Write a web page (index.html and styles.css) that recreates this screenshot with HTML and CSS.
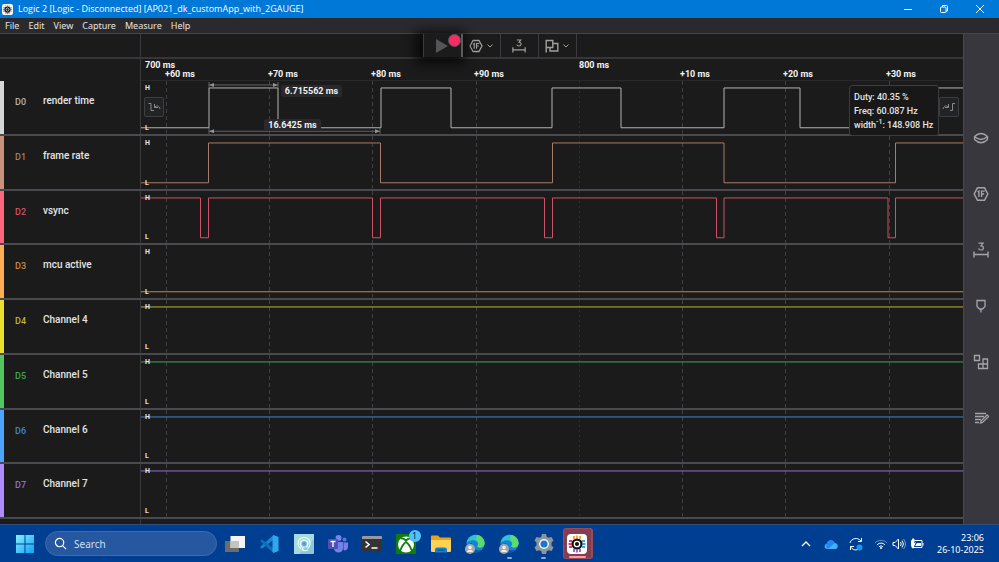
FILE: index.html
```
<!DOCTYPE html>
<html lang="en">
<head>
<meta charset="utf-8">
<title>Logic 2 [Logic - Disconnected] [AP021_dk_customApp_with_2GAUGE]</title>
<link rel="stylesheet" href="styles.css">
</head>
<body>
<svg class="defs" aria-hidden="true">
  <symbol id="logic" viewBox="0 0 20 20">
    <rect width="20" height="20" rx="4" fill="#fff"/>
    <path d="M7 2v3M10 1.500v3M13 2v3" stroke="#f8a01c" stroke-width="1.800"/>
    <path d="M7 15v3M10 15.500v3M13 15v3" stroke="#a34bf0" stroke-width="1.800"/>
    <path d="M2 7h3M1.500 10h3M2 13h3" stroke="#f2345a" stroke-width="1.800"/>
    <path d="M15 7h3M15.500 10h3M15 13h3" stroke="#35a7f3" stroke-width="1.800"/>
    <circle cx="10" cy="10" r="5.600" fill="#111"/><circle cx="10" cy="10" r="2.700" fill="none" stroke="#fff" stroke-width="1.300"/>
  </symbol>
  <symbol id="hex" viewBox="0 0 14 14">
    <path d="M4 1.500h6L13 7l-3 5.500H4L1 7z" fill="none" stroke="currentColor" stroke-width="1.300" stroke-linejoin="round"/>
    <path d="M4 5.200l1.200-.7v5.200M7.500 9.700V4.500h2.800M7.500 7h2.300" fill="none" stroke="currentColor" stroke-width="1.200"/>
  </symbol>
  <symbol id="three" viewBox="0 0 16 16">
    <path d="M5.500 1.200h4.500L8 3.800c3.300 0 3 4.200 0 4.200-1.400 0-2.300-.7-2.500-1.600" fill="none" stroke="currentColor" stroke-width="1.200"/>
    <path d="M1 9.500v6M15 9.500v6M1 12.500h14" fill="none" stroke="currentColor" stroke-width="1.400"/>
  </symbol>
  <symbol id="down" viewBox="0 0 8 6"><path d="M1.500 1.500L4 4l2.500-2.500" fill="none" stroke="currentColor"/></symbol>
  <symbol id="ticks" viewBox="0 0 822 53" preserveAspectRatio="none">
    <path class="tick" d="M25.500 0V53M128.500 0V53M231.500 0V53M335.500 0V53M541.500 0V53M644.500 0V53M748.500 0V53"/>
    <path class="tick major" d="M438.500 0V53"/>
  </symbol>
  <symbol id="browser" viewBox="0 0 20 20">
    <circle cx="10.500" cy="9.500" r="9" fill="#1684d4"/>
    <path d="M1.500 9C3 1.500 10 0 14 1.500c5 2 6.500 7 5 10-1.500 2.500-5 2.500-7 1 2-2 1-5-2-6-3-.8-7 .5-8.500 2.500z" fill="#2fc3d4"/>
    <path d="M12 1c6 .5 8.500 6.500 7.200 10-1.200 2.800-5 3-7.200 1.500 2-2 2-5-1-7z" fill="#5edb68"/>
    <path d="M7 9c-1 5 4 8.500 9.500 7-4 4-10 3-12.500-1-1.500-3 0-5 3-6z" fill="#0b55a8"/>
    <circle cx="5" cy="15" r="5" fill="#a9a9aa"/><circle cx="5" cy="13.500" r="1.800" fill="#eee"/><path d="M2 18c.5-3 5.500-3 6 0z" fill="#eee"/>
  </symbol>
</svg>

<header class="titlebar">
  <svg class="app-icon"><use href="#logic"/></svg>
  <h1>Logic 2 [Logic - Disconnected] [AP021_dk_customApp_with_2GAUGE]</h1>
  <button aria-label="Minimize"><svg viewBox="0 0 10 10"><path d="M1 5.500h8"/></svg></button>
  <button aria-label="Restore"><svg viewBox="0 0 10 10"><rect x="1.500" y="3" width="5.500" height="5.500" rx="1"/><path d="M3.500 3V1.500h4Q8.500 1.500 8.500 2.500v4.500H7"/></svg></button>
  <button aria-label="Close"><svg viewBox="0 0 10 10"><path d="M1 1l8 8M9 1L1 9"/></svg></button>
</header>

<nav class="menubar">
  <button>File</button><button>Edit</button><button>View</button><button>Capture</button><button>Measure</button><button>Help</button>
</nav>

<main>
  <section class="workspace">
    <div class="toolbar">
      <button class="play" aria-label="Start capture"><svg viewBox="0 0 12 14"><path d="M0 0l12 7-12 7z" fill="#555557"/></svg><span class="record"></span></button>
      <button aria-label="Analyzers"><svg class="i14"><use href="#hex"/></svg><svg class="caret"><use href="#down"/></svg></button>
      <button aria-label="Measurements"><svg class="i14"><use href="#three"/></svg></button>
      <button aria-label="Markers"><svg class="i14" viewBox="0 0 14 14"><path d="M1.200 13.500V1.500h6.600v7H1.200M7.800 4.500H12.800V12H5V8.500" fill="none" stroke="currentColor" stroke-width="1.400"/></svg><svg class="caret"><use href="#down"/></svg></button>
    </div>

    <div class="ruler">
      <span class="base first">700 ms</span><span class="base second">800 ms</span>
      <span class="step s1">+60 ms</span><span class="step s2">+70 ms</span><span class="step s3">+80 ms</span><span class="step s4">+90 ms</span>
      <span class="step s6">+10 ms</span><span class="step s7">+20 ms</span><span class="step s8">+30 ms</span>
    </div>

    <div class="channels">
      <div class="channel d0">
        <div class="label"><span class="id">D0</span><span>render time</span></div>
        <div class="plot">
          <svg class="wave" viewBox="0 0 822 53" preserveAspectRatio="none"><use href="#ticks"/>
            <path class="trace" d="M0 47H68V7H137V47H240V7H310V47H411V7H480V47H583V7H659V47H755V7H822"/>
            <path class="span" d="M68 4H137M68 50.500H239M68 1V7M137 1V7M68 47V53M239 47V53"/>
            <path class="heads" d="M68 4l5-2v4zM137 4l-5-2v4zM68 50.500l5-2v4zM239 50.500l-5-2v4z"/>
          </svg>
          <div class="levels"><b>H</b><b>L</b></div>
          <span class="measure pulse">6.715562 ms</span>
          <span class="measure period">16.6425 ms</span>
          <button class="snap previous" aria-label="Previous edge"><svg viewBox="0 0 14 10"><path d="M1.500 1.500H4v7h3M13 7C12 3.500 9.500 3 7.500 5.500M7.500 2v3.500H11"/></svg></button>
          <button class="snap next" aria-label="Next edge"><svg viewBox="0 0 14 10"><path d="M13 1.500h-2.500v7H8M1 7C2 3.500 4.500 3 6.500 5.500M6.500 2v3.500H3"/></svg></button>
          <div class="tooltip"><div>Duty: 40.35 %</div><div>Freq: 60.087 Hz</div><div>width<sup>-1</sup>: 148.908 Hz</div></div>
        </div>
      </div>
      <div class="channel d1">
        <div class="label"><span class="id">D1</span><span>frame rate</span></div>
        <div class="plot"><svg class="wave" viewBox="0 0 822 53" preserveAspectRatio="none"><use href="#ticks"/><path class="trace" d="M0 47H67.500V7H239.500V47H411.500V7H583V47H754.500V7H822"/></svg><div class="levels"><b>H</b><b>L</b></div></div>
      </div>
      <div class="channel d2">
        <div class="label"><span class="id">D2</span><span>vsync</span></div>
        <div class="plot"><svg class="wave" viewBox="0 0 822 53" preserveAspectRatio="none"><use href="#ticks"/><path class="trace" d="M0 7H59.500V47H67.500V7H231.500V47H239.500V7H403.500V47H411.500V7H575.500V47H583V7H747V47H754.500V7H822"/></svg><div class="levels"><b>H</b><b>L</b></div></div>
      </div>
      <div class="channel d3">
        <div class="label"><span class="id">D3</span><span>mcu active</span></div>
        <div class="plot"><svg class="wave" viewBox="0 0 822 53" preserveAspectRatio="none"><use href="#ticks"/><path class="trace" d="M0 47H822"/></svg><div class="levels"><b>H</b><b>L</b></div></div>
      </div>
      <div class="channel d4">
        <div class="label"><span class="id">D4</span><span>Channel 4</span></div>
        <div class="plot"><svg class="wave" viewBox="0 0 822 53" preserveAspectRatio="none"><use href="#ticks"/><path class="trace" d="M0 7H822"/></svg><div class="levels"><b>H</b><b>L</b></div></div>
      </div>
      <div class="channel d5">
        <div class="label"><span class="id">D5</span><span>Channel 5</span></div>
        <div class="plot"><svg class="wave" viewBox="0 0 822 53" preserveAspectRatio="none"><use href="#ticks"/><path class="trace" d="M0 7H822"/></svg><div class="levels"><b>H</b><b>L</b></div></div>
      </div>
      <div class="channel d6">
        <div class="label"><span class="id">D6</span><span>Channel 6</span></div>
        <div class="plot"><svg class="wave" viewBox="0 0 822 53" preserveAspectRatio="none"><use href="#ticks"/><path class="trace" d="M0 7H822"/></svg><div class="levels"><b>H</b><b>L</b></div></div>
      </div>
      <div class="channel d7">
        <div class="label"><span class="id">D7</span><span>Channel 7</span></div>
        <div class="plot"><svg class="wave" viewBox="0 0 822 53" preserveAspectRatio="none"><use href="#ticks"/><path class="trace" d="M0 7H822"/></svg><div class="levels"><b>H</b><b>L</b></div></div>
      </div>
    </div>
  </section>

  <aside class="sidebar">
    <button aria-label="Device"><svg viewBox="0 0 16 16"><path d="M1.500 6.500Q8 .5 14.500 6.500 8 12.500 1.500 6.500zM1.500 6.500v3Q8 16 14.500 9.500v-3" stroke-linejoin="round"/></svg></button>
    <button aria-label="Analyzers"><svg><use href="#hex"/></svg></button>
    <button aria-label="Measurements"><svg><use href="#three"/></svg></button>
    <button aria-label="Annotations"><svg viewBox="0 0 16 16"><path d="M4 2.500h8v6L9.500 11h-3L4 8.500zM8 11v3.500"/></svg></button>
    <button aria-label="Extensions"><svg viewBox="0 0 16 16"><path d="M1.500 1.500h5v5h-5zM9.500 5h5v9.500h-9V10h9M10 5v9.500"/></svg></button>
    <button aria-label="Notes"><svg viewBox="0 0 16 16"><path d="M2 3.500h11M2 6.500h9M2 9.500h6M2 12.500h4M7.500 13l.5-2 6-6 1.500 1.500-6 6z"/></svg></button>
  </aside>
</main>

<footer class="taskbar">
  <button class="start" aria-label="Start"><svg viewBox="0 0 20 20"><defs><linearGradient id="win" x1="0" y1="0" x2="1" y2="1"><stop stop-color="#86f0fe"/><stop offset="1" stop-color="#0fa2f5"/></linearGradient></defs><path fill="url(#win)" d="M1 1h8.500v8.500H1zM10.500 1H19v8.500h-8.500zM1 10.500h8.500V19H1zM10.500 10.500H19V19h-8.500z"/></svg></button>
  <label class="search"><svg viewBox="0 0 14 14"><circle cx="6" cy="6" r="4.500"/><path d="M9.500 9.500L13 13"/></svg><input type="text" placeholder="Search" aria-label="Search"></label>
  <div class="apps">
    <button aria-label="Task view"><svg viewBox="0 0 20 20"><path d="M0 7h14v11H0z" fill="#6f6c68"/><path d="M5.500 2H20v12H5.500z" fill="#f4f4f4"/><path d="M5.500 7H14v7H5.500z" fill="#c4c4c4"/></svg></button>
    <button aria-label="Visual Studio Code"><svg viewBox="0 0 20 20"><path d="M14.500 1L1 13l1.800 1.800L15 5.500z" fill="#1288d5"/><path d="M14.500 19L1 7l1.800-1.800L15 14.500z" fill="#0872b9"/><path d="M14.500 1L19.500 3v14l-5 2-1-1.500v-15z" fill="#30a6ee"/></svg></button>
    <button aria-label="Toolkit"><svg viewBox="0 0 20 20"><rect width="20" height="20" rx="1" fill="#8cc6d8"/><path d="M0 0h20v5L5 20H0z" fill="#a8dcdc"/><path d="M7 14.500C1 10 5 3.500 10 3.500S19 10 13.500 14.500M8 13C4.500 9.500 7 6 10 6s5.500 3.500 2.500 7M14 16c-6 2-6-1-5-3" fill="none" stroke="#e8ffff" stroke-width="1.200"/><circle cx="10.200" cy="9.800" r="2.200" fill="#5b9ccc"/></svg></button>
    <button aria-label="Teams"><svg viewBox="0 0 20 20"><circle cx="10.500" cy="4" r="3" fill="#7b83eb"/><circle cx="16.500" cy="5.500" r="2" fill="#6670d8"/><path d="M6 8h9v6c0 6-9 6-9 0zM15.500 8.500H20V13c0 3-3 4-4.500 3z" fill="#7580e8"/><rect y="5" width="10" height="10" rx="1" fill="#4d50b8"/><path d="M2.500 7.500h5M5 7.500V13" stroke="#fff" stroke-width="1.300"/></svg></button>
    <button aria-label="Terminal"><svg viewBox="0 0 20 20"><rect y="2" width="20" height="16" rx="1" fill="#343434"/><path d="M0 3q0-1 1-1h18q1 0 1 1v2H0z" fill="#999"/><path d="M3.500 7.500L7 10.500l-3.500 3M9.500 14h6" fill="none" stroke="#fff" stroke-width="1.600"/></svg></button>
    <button aria-label="Xbox"><svg viewBox="0 0 20 20"><rect width="20" height="20" rx="1" fill="#107c10"/><circle cx="10" cy="10.500" r="8" fill="#fff"/><path d="M4 17C5.500 13 8.500 9 10 8c1.500 1 4.500 5 6 9M4.500 4.500C7 4 9 5.500 10 6.500c1-1 3-2.500 5.500-2" fill="none" stroke="#107c10" stroke-width="1.800"/></svg><span class="badge">1</span></button>
    <button aria-label="File Explorer"><svg viewBox="0 0 20 20"><path d="M0 2.500q0-1 1-1h6l2 2h10q1 0 1 1V10H0z" fill="#e7a313"/><path d="M0 6h20v11q0 1-1 1H1q-1 0-1-1z" fill="#ffd255"/><path d="M4 18.500v-3q0-2 2-2h8q2 0 2 2v3z" fill="#1b7ecb"/><path d="M6.500 16h7" stroke="#095591" stroke-width="1.200"/></svg></button>
    <button aria-label="Edge"><svg><use href="#browser"/></svg></button>
    <button class="open" aria-label="Edge, second profile"><svg><use href="#browser"/></svg></button>
    <button class="open" aria-label="Settings"><svg viewBox="0 0 20 20"><path d="M8 0h4l.7 2.800 2 1 2.800-.8 2 3.500-2 2v3l2 2-2 3.500-2.800-.8-2 1L12 20H8l-.7-2.800-2-1-2.800.8-2-3.500 2-2v-3l-2-2L2.500 3l2.800.8 2-1z" fill="#8d959d"/><circle cx="10" cy="10" r="5" fill="#f1f3f5"/><circle cx="10" cy="10" r="3.500" fill="#1677cf"/></svg></button>
    <button class="active" aria-label="Logic 2"><svg><use href="#logic"/></svg></button>
  </div>
  <div class="tray">
    <svg class="line" viewBox="0 0 14 14"><path d="M3 9l4-4 4 4" stroke-width="1.300"/></svg>
    <svg class="cloud" viewBox="0 0 14 14"><path d="M3.500 12C-.5 12 0 7 3 6.500 4 2.500 9.500 2 10.500 6c4 0 4.500 6 .5 6z" fill="#35b8fa"/><path d="M3 6.500C4 2.500 9.500 2 10.500 6L4.500 11.500Q1 11 3 6.500z" fill="#2d83ef"/></svg>
    <svg class="line sync" viewBox="0 0 14 14"><path d="M1 6C2 1 9 0 12 4M12.500 1v3.500H9M1.500 13V9.500H5M1.500 9.500C3 12.500 6 13.500 9 12.500"/><circle cx="10.500" cy="10.500" r="3" fill="#1598ee" stroke="none"/></svg>
    <svg class="line wifi" viewBox="0 0 14 14"><path d="M1 6C4 2.500 10 2.500 13 6" opacity=".4"/><path d="M3 8C5 5.500 9 5.500 11 8M5 10c1-1.500 3-1.500 4 0"/><circle cx="7" cy="11" r="1" fill="#fff" stroke="none"/></svg>
    <svg class="line" viewBox="0 0 14 14"><path d="M1 5.500h2L6.500 2v10L3 8.500H1zM8.500 5q1.500 2 0 4M10 3.500q3 3.500 0 7"/><path d="M11.500 2q4 5 0 10" opacity=".5"/></svg>
    <svg class="line battery" viewBox="0 0 14 14"><path d="M5 3.500h7v7H2V8M13 6v2.500"/><path d="M1 8V4l2-3 2 2-1 3 2-1-3 7zM7 6h4v3H5z" fill="#fff" stroke="none"/></svg>
    <time datetime="2025-10-26T23:06"><span>23:06</span><span>26-10-2025</span></time>
  </div>
</footer>
</body>
</html>
```
FILE: styles.css
```
* { box-sizing: border-box; }
body {
  margin: 0;
  height: 100vh;
  display: grid;
  grid-template-rows: 18px 16px minmax(0, 1fr) 38px;
  overflow: hidden;
  background: #1b1b1b;
  color: #e4e4e4;
  font: 10px/12px Roboto, sans-serif;
}
button { padding: 0; border: 0; background: none; color: inherit; font: inherit; }
svg { display: block; flex: none; }
.defs { position: absolute; width: 0; height: 0; }

.menubar, .taskbar { font-family: "Noto Sans", sans-serif; }
.titlebar { display: flex; align-items: center; padding-right: 1px; background: #0078d7; color: #fff; font-family: "Open Sans", sans-serif; }
.titlebar h1 { flex: 1; margin: 0 0 0 5px; font-size: 9px; font-weight: 400; }
.app-icon { width: 11px; height: 11px; margin-left: 2px; }
.titlebar button { width: 36px; height: 18px; display: grid; place-items: center; }
.titlebar button svg { width: 10px; height: 10px; fill: none; stroke: #fff; }

.menubar { display: flex; align-items: center; gap: 9px; padding-left: 5px; background: #2a2a2e; border-bottom: 1px solid #45454a; font-size: 9px; }

main { display: grid; grid-template-columns: minmax(0, 1fr) 36px; grid-template-rows: minmax(0, 1fr); min-height: 0; }
.workspace {
  display: grid;
  grid-template-rows: 25px 22px minmax(0, 1fr);
  min-height: 0;
  padding-bottom: 5px;
  background: linear-gradient(#3b3b3f, #3b3b3f) 140px 0 / 1px 100% no-repeat #1b1b1b;
}
.toolbar { display: flex; justify-content: center; padding-left: 36px; border-bottom: 2px solid #36363a; }
.toolbar button { width: 38px; display: flex; align-items: center; justify-content: center; gap: 3px; border-right: 1px solid #3c3c40; color: #a0a0a0; background: #1b1b1b; }
.toolbar .play { position: relative; width: 40px; border-left: 1px solid #3c3c40; border-right: 2px solid #59595e; box-shadow: -3px 2px 12px 4px #080808; }
.play svg { width: 12px; height: 14px; }
.record { position: absolute; top: 0; right: 0; width: 13px; height: 13px; border: 1px solid #55555b; border-radius: 50%; background: #fb2a63; }
.i14 { width: 14px; height: 14px; }
.caret { width: 8px; height: 6px; }

.ruler {
  display: grid;
  grid-template-columns: minmax(0, 24fr) repeat(7, minmax(0, 103fr)) minmax(0, 77fr);
  grid-template-rows: 10px 9px;
  margin-left: 141px;
  border-bottom: 1px solid #29292b;
  font-size: 9px;
  line-height: 12px;
  font-weight: 700;
  color: #f3f3f3;
  white-space: nowrap;
}
.base { grid-row: 1; }
.first { grid-column: 1; padding-left: 4px; }
.second { grid-column: 6; padding-left: 2px; }
.step { grid-row: 2; line-height: 10px; }
.s1 { grid-column: 2; } .s2 { grid-column: 3; } .s3 { grid-column: 4; } .s4 { grid-column: 5; }
.s6 { grid-column: 7; } .s7 { grid-column: 8; } .s8 { grid-column: 9; }

.channels { display: grid; grid-template-rows: repeat(8, minmax(0, 1fr)); min-height: 0; }
.channel { display: grid; grid-template-columns: 141px minmax(0, 1fr); grid-template-rows: minmax(0, 1fr); min-height: 0; border-bottom: 2px solid #4a4a4e; }
.label { display: grid; grid-template-columns: 28px 1fr; align-items: start; margin-right: 1px; padding: 13px 0 0 11px; border-left: 4px solid var(--bar); font-size: 10px; line-height: 14px; font-weight: 500; }
.id { color: var(--line); font-size: 9px; line-height: 16px; }
.plot { position: relative; min-height: 0; }
.wave { width: 100%; height: 100%; }
.wave path { vector-effect: non-scaling-stroke; }
.trace { fill: none; stroke: var(--line); stroke-width: 1px; shape-rendering: crispEdges; }
.tick { fill: none; stroke: #414143; stroke-dasharray: 4 3; vector-effect: non-scaling-stroke; shape-rendering: crispEdges; }
.major { stroke: #2e2e30; stroke-dasharray: 2 3; }
.span { fill: none; stroke: #626264; shape-rendering: crispEdges; }
.heads { fill: #929292; }
.levels { position: absolute; inset: 3px auto 2px 4px; display: flex; flex-direction: column; justify-content: space-between; font-size: 7px; line-height: 8px; }
.d0 { --bar: #d6d6d6; --line: #b4b4b4; }
.d1 { --bar: #c7917a; --line: #a87b68; }
.d2 { --bar: #ff667d; --line: #cc5267; }
.d3 { --bar: #ffad55; --line: #c98846; }
.d4 { --bar: #e9df31; --line: #c0b42b; }
.d5 { --bar: #50c760; --line: #46a354; }
.d6 { --bar: #4ba5ff; --line: #3f88cf; }
.d7 { --bar: #ad8cff; --line: #8c73ca; }
.measure { position: absolute; padding: 0 4px; border-radius: 2px; background: #29292c; color: #f1f1f1; font-size: 9px; font-weight: 700; white-space: nowrap; }
.pulse { left: 17%; top: 4px; }
.period { left: 15%; bottom: 3px; }
.snap { position: absolute; top: 16px; width: 20px; height: 20px; display: grid; place-items: center; border: 1px solid #3d3e42; border-radius: 2px; background: #222325; }
.snap svg { width: 14px; height: 10px; fill: none; stroke: #8a8a8c; }
.previous { left: 3px; }
.next { right: 4px; }
.tooltip { position: absolute; z-index: 1; top: 4px; right: 24px; width: 90px; padding: 4px 4px 3px; border: 1px solid #3c3c3f; border-radius: 3px; background: #181818; font-size: 9px; line-height: 14px; font-weight: 500; white-space: nowrap; }
.tooltip sup { font-size: 7px; line-height: 0; }

.sidebar { display: flex; flex-direction: column; gap: 40px; padding: 96px 2px 0 0; background: #38373d; border-left: 1px solid #48484d; color: #a5a5a7; }
.sidebar button { height: 16px; display: grid; place-items: center; }
.sidebar svg { width: 16px; height: 16px; fill: none; stroke: currentColor; stroke-width: 1.3; }

.taskbar { display: flex; align-items: center; background: #003e92; border-top: 1px solid #2c5080; color: #fff; }
.start { margin-left: 15px; }
.start svg, .apps svg { width: 20px; height: 20px; }
.search { display: flex; align-items: center; gap: 7px; width: 172px; height: 25px; margin-left: 10px; padding-left: 8px; border: 1px solid #4169ab; border-radius: 13px; background: #2558a0; }
.search svg { width: 13px; height: 13px; fill: none; stroke: #fff; stroke-width: 1.3; }
.search input { width: 120px; padding: 0; border: 0; outline: 0; background: none; color: #fff; font: 10px/14px "Noto Sans", sans-serif; }
.search input::placeholder { color: #d3def0; opacity: 1; }
.apps { display: grid; grid-template-columns: repeat(11, 1fr); width: 377px; height: 100%; margin-left: 1px; }
.apps button { position: relative; display: grid; place-items: center; }
.badge { position: absolute; top: 5px; right: 3px; width: 12px; height: 12px; border-radius: 50%; background: #4cc2ff; color: #05264a; font-size: 9px; line-height: 12px; text-align: center; }
.open::after { content: ""; position: absolute; bottom: 3px; width: 5px; height: 2px; border-radius: 1px; background: #8da9d2; }
.apps .active { margin: 3px 2px; border: 1px solid #984b5b; border-right-width: 2px; border-radius: 3px; background: #833e4f; }
.active::after { content: ""; position: absolute; bottom: 0; width: 17px; height: 2px; border-radius: 1px; background: #ff9ba3; }
.tray { flex: 1; display: flex; align-items: center; justify-content: flex-end; padding-right: 15px; }
.tray svg { width: 14px; height: 14px; margin-right: 4px; }
.tray .cloud, .tray .sync { margin-right: 11px; }
.tray svg:first-child { margin-right: 11px; }
.tray .battery { margin-right: 13px; }
.line { fill: none; stroke: #fff; }
time { display: grid; font-size: 9px; line-height: 12px; text-align: right; }
```
